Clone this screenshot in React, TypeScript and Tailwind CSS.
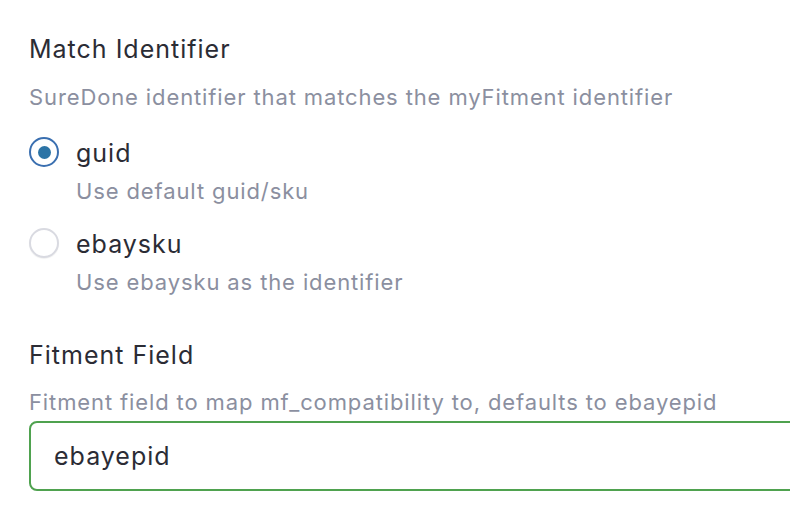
import { useState } from "react";

type Option = { value: string; label: string; help: string };

const options: Option[] = [
  { value: "guid", label: "guid", help: "Use default guid/sku" },
  { value: "ebaysku", label: "ebaysku", help: "Use ebaysku as the identifier" },
];

function Radio({ checked }: { checked: boolean }) {
  return checked ? (
    <span className="flex h-[30px] w-[30px] shrink-0 items-center justify-center rounded-full border-2 border-[#3a6fb0] bg-white">
      <span className="block h-[13px] w-[13px] rounded-full bg-[#2c74a6]" />
    </span>
  ) : (
    <span className="block h-[30px] w-[30px] shrink-0 rounded-full border-2 border-[#d9dae1] bg-white shadow-[0_1px_1px_rgba(0,0,0,0.06)]" />
  );
}

export default function App() {
  const [value, setValue] = useState("guid");

  return (
    <div
      className="h-[522px] w-[790px] overflow-hidden bg-white pl-[29px] pt-[33px] text-[#2b2c35]"
      style={{ fontFamily: "Inter, 'Noto Sans', sans-serif" }}
    >
      <h2 className="text-[25px] leading-[32px] tracking-[1px]">Match Identifier</h2>
      <p className="mt-[17px] text-[22px] leading-[30px] tracking-[0.88px] text-[#8b8fa0]">
        SureDone identifier that matches the myFitment identifier
      </p>

      <div className="mt-[25px] flex flex-col gap-[22px]">
        {options.map((o) => (
          <label
            key={o.value}
            className="flex cursor-pointer items-start gap-[17px]"
            onClick={() => setValue(o.value)}
          >
            <span className="block">
              <Radio checked={value === o.value} />
            </span>
            <span className="flex flex-col">
              <span className="text-[25px] leading-[32px] tracking-[1px]">{o.label}</span>
              <span className="mt-[7px] text-[22px] leading-[30px] tracking-[0.88px] text-[#8b8fa0]">
                {o.help}
              </span>
            </span>
          </label>
        ))}
      </div>

      <h2 className="mt-[42px] text-[25px] leading-[32px] tracking-[1px]">Fitment Field</h2>
      <p className="mt-[16px] text-[22px] leading-[30px] tracking-[0.88px] text-[#8b8fa0]">
        Fitment field to map mf_compatibility to, defaults to ebayepid
      </p>
      <input
        defaultValue="ebayepid"
        className="mt-[4px] h-[70px] w-[800px] rounded-[8px] border-2 border-[#4fa24f] bg-white px-[23px] text-[25px] tracking-[1px] text-[#2b2c35] outline-none"
      />
    </div>
  );
}
